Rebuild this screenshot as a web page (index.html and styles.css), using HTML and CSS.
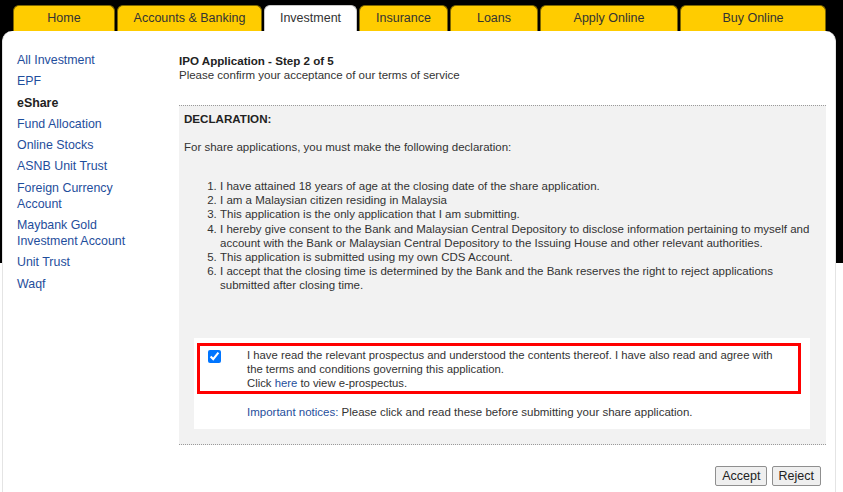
FILE: index.html
```html
<!DOCTYPE html>
<html lang="en">
<head>
    <meta charset="UTF-8" />
    <title>IPO Application - Step 2 of 5</title>
    <link rel="stylesheet" href="styles.css">
</head>
<body>

<!-- Top tabs -->
<div class="tabs">
    <a class="tab tab-home" href="#">Home</a>
    <a class="tab tab-accounts" href="#">Accounts &amp; Banking</a>
    <a class="tab tab-investment active" href="#">Investment</a>
    <a class="tab tab-insurance" href="#">Insurance</a>
    <a class="tab tab-loans" href="#">Loans</a>
    <a class="tab tab-apply" href="#">Apply Online</a>
    <a class="tab tab-buy" href="#">Buy Online</a>
</div>

<div class="card">

    <!-- Side menu -->
    <ul class="side-nav">
        <li><a href="#">All Investment</a></li>
        <li><a href="#">EPF</a></li>
        <li class="current">eShare</li>
        <li><a href="#">Fund Allocation</a></li>
        <li><a href="#">Online Stocks</a></li>
        <li><a href="#">ASNB Unit Trust</a></li>
        <li><a href="#">Foreign Currency Account</a></li>
        <li><a href="#">Maybank Gold Investment Account</a></li>
        <li><a href="#">Unit Trust</a></li>
        <li><a href="#">Waqf</a></li>
    </ul>

    <div class="main">
        <h1 class="page-title">IPO Application - Step 2 of 5</h1>
        <p class="subtitle">Please confirm your acceptance of our terms of service</p>

        <div class="panel">
            <h2 class="panel-title">DECLARATION:</h2>
            <p class="intro">For share applications, you must make the following declaration:</p>
            <ol class="declarations">
                <li>I have attained 18 years of age at the closing date of the share application.</li>
                <li>I am a Malaysian citizen residing in Malaysia</li>
                <li>This application is the only application that I am submitting.</li>
                <li>I hereby give consent to the Bank and Malaysian Central Depository to disclose information pertaining to myself and account with the Bank or Malaysian Central Depository to the Issuing House and other relevant authorities.</li>
                <li>This application is submitted using my own CDS Account.</li>
                <li>I accept that the closing time is determined by the Bank and the Bank reserves the right to reject applications submitted after closing time.</li>
            </ol>

            <div class="consent-box">
                <table class="consent">
                    <tr>
                        <td class="consent-check"><input type="checkbox" checked></td>
                        <td class="consent-text">I have read the relevant prospectus and understood the contents thereof. I have also read and agree with the terms and conditions governing this application.<br>Click <a href="#">here</a> to view e-prospectus.</td>
                    </tr>
                </table>
                <p class="notice"><a href="#">Important notices:</a> Please click and read these before submitting your share application.</p>
            </div>
        </div>

        <div class="actions">
            <button type="button">Accept</button>
            <button type="button">Reject</button>
        </div>
    </div>
</div>

</body>
</html>
```

FILE: styles.css
```css
body {
    margin: 0;
    padding: 0;
    font-family: "Liberation Sans", Arial, sans-serif;
    font-size: 11.5px;
    color: #333;
    background: linear-gradient(#000 0, #000 263px, #fff 263px);
}

a {
    color: #1f4e9c;
    text-decoration: none;
}

/* tabs */
.tabs {
    display: flex;
    gap: 2px;
    padding: 5px 0 0 13px;
    height: 26px;
}

.tab {
    box-sizing: border-box;
    height: 26px;
    line-height: 24px;
    text-align: center;
    font-size: 12.5px;
    color: #333;
    background-color: #ffcc00;
    border: 1px solid #7d6600;
    border-bottom: none;
    border-radius: 6px 6px 0 0;
}

.tab.active {
    background-color: #fff;
    border-color: #c8c8c8;
}

.tab-home { width: 102px; }
.tab-accounts { width: 145px; }
.tab-investment { width: 93px; }
.tab-insurance { width: 89px; }
.tab-loans { width: 88px; }
.tab-apply { width: 138px; }
.tab-buy { width: 146px; }

/* card */
.card {
    display: flex;
    align-items: flex-start;
    box-sizing: border-box;
    width: 834px;
    min-height: 461px;
    margin-left: 2px;
    padding: 21px 9px 0 14px;
    background-color: #fff;
    border-left: 1px solid #e4e4e4;
    border-right: 1px solid #e4e4e4;
    border-radius: 10px 10px 0 0;
}

.side-nav {
    list-style: none;
    margin: 0 37px 0 0;
    padding: 0;
    width: 125px;
    flex-shrink: 0;
    font-size: 12.4px;
    line-height: 16px;
}

.side-nav li {
    padding-bottom: 5.3px;
}

.side-nav .current {
    font-weight: bold;
    color: #222;
}

.main {
    flex: 1;
}

.page-title {
    margin: 1px 0 0;
    font-size: 11.6px;
    line-height: 15px;
    color: #222;
}

.subtitle {
    margin: 0 0 23px;
    line-height: 14px;
}

/* declaration panel */
.panel {
    background-color: #f2f2f2;
    border-top: 1px dotted #9a9a9a;
    border-bottom: 1px dotted #9a9a9a;
    padding: 6px 0 15px 5px;
}

.panel-title {
    margin: 0;
    font-size: 11.6px;
    line-height: 14px;
    color: #222;
}

.intro {
    margin: 14px 0 0;
    line-height: 14px;
}

.declarations {
    margin: 25px 0 0;
    padding-left: 36px;
    padding-right: 10px;
    line-height: 14.2px;
}

.consent-box {
    margin: 45px 16px 0 10px;
    padding: 5px 9px 10px 3px;
    background-color: #fff;
}

.consent {
    width: 100%;
    border: 3px solid #ff0000;
    border-collapse: collapse;
}

.consent td {
    padding: 0;
    vertical-align: top;
    line-height: 14px;
}

.consent-check {
    width: 47px;
}

.consent-check input {
    margin: 4px 0 0 8px;
    width: 13px;
    height: 13px;
}

.consent-text {
    font-size: 11.3px;
    padding: 2px 14px 1px 0 !important;
}

.notice {
    margin: 11px 0 0 50px;
    line-height: 14px;
}

.actions {
    margin-top: 21px;
    text-align: right;
    padding-right: 5px;
}

.actions button {
    font-family: "Liberation Sans", Arial, sans-serif;
    font-size: 12.5px;
    color: #222;
    height: 20px;
    padding: 0 6px;
    margin-left: 1px;
    background-color: #efefef;
    border: 1px solid #8f8f8f;
    border-radius: 2px;
}
```
